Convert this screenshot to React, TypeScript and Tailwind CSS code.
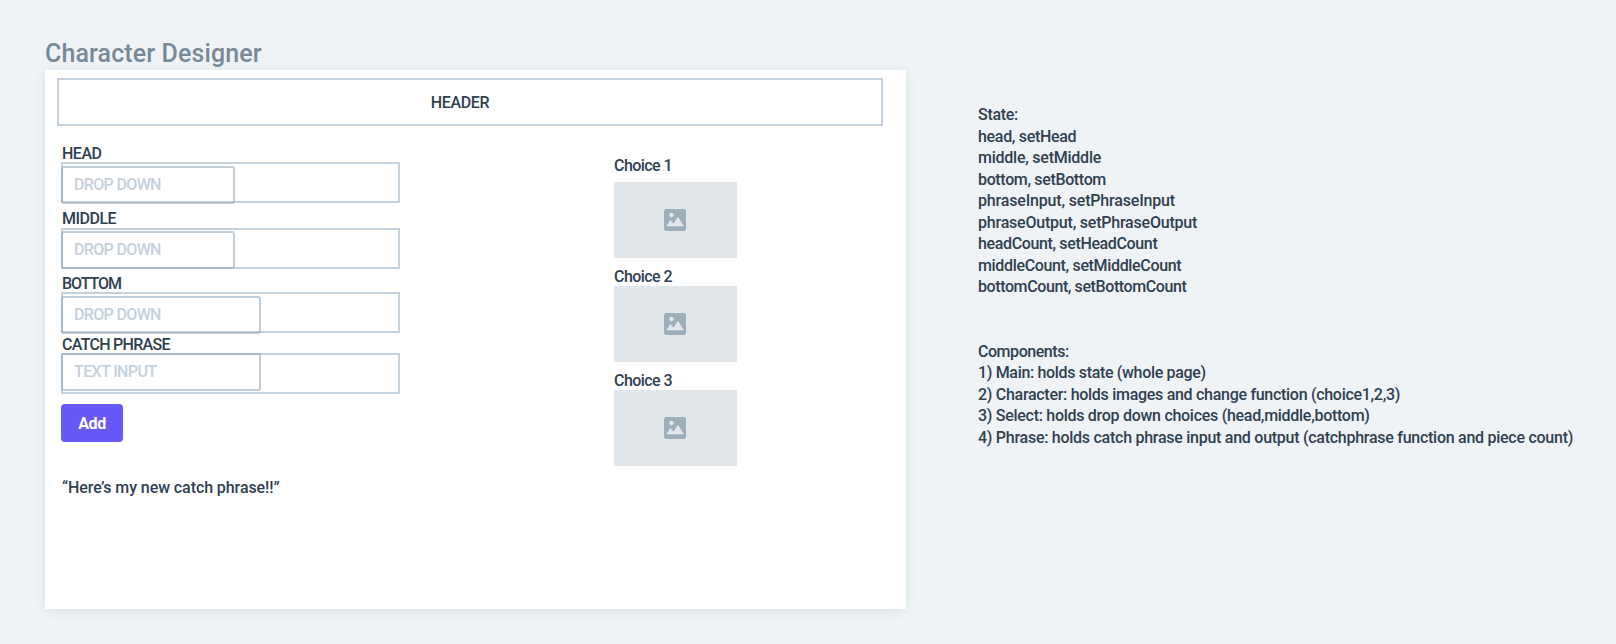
type FieldProps = {
  label: string;
  placeholder: string;
  labelClass: string;
  boxClass: string;
  inputClass: string;
  textClass: string;
};

function Field({ label, placeholder, labelClass, boxClass, inputClass, textClass }: FieldProps) {
  return (
    <div>
      <div className={`h-4 pl-px leading-4 whitespace-nowrap ${labelClass}`}>{label}</div>
      <div className={`h-[41px] w-[339px] border-2 border-[#c5d1dc] ${boxClass}`}>
        <div
          className={`-ml-[2px] flex items-center rounded-[3px] border-2 border-[#8fa5b8]/55 pl-[11px] text-[#c5d1dc] ${inputClass}`}
        >
          <span className={`whitespace-nowrap ${textClass}`}>{placeholder}</span>
        </div>
      </div>
    </div>
  );
}

function Choice({ n, imageClass }: { n: number; imageClass: string }) {
  return (
    <div>
      <div className="h-4 leading-4 tracking-[-0.55px]">Choice {n}</div>
      <div className={`flex h-[76px] w-[123px] items-center justify-center bg-[#e1e7eb] ${imageClass}`}>
        <svg width="22" height="22" viewBox="0 0 22 22" className="mr-px mb-px block">
          <rect width="22" height="22" rx="2" fill="#9eafbc" />
          <circle cx="7.5" cy="6" r="2.2" fill="#e1e7eb" />
          <path d="M2.3 17.2 6.4 11l3 3.8L14 7.7l5.8 9.5z" fill="#e1e7eb" />
        </svg>
      </div>
    </div>
  );
}

const notes: [string, string][] = [
  ["State:", "tracking-[-0.3px]"],
  ["head, setHead", "tracking-[-0.31px]"],
  ["middle, setMiddle", "tracking-[-0.24px]"],
  ["bottom, setBottom", "tracking-[-0.35px]"],
  ["phraseInput, setPhraseInput", "tracking-[-0.17px]"],
  ["phraseOutput, setPhraseOutput", "tracking-[-0.21px]"],
  ["headCount, setHeadCount", "tracking-[-0.36px]"],
  ["middleCount, setMiddleCount", "tracking-[-0.34px]"],
  ["bottomCount, setBottomCount", "tracking-[-0.4px]"],
  ["", ""],
  ["", ""],
  ["Components:", "tracking-[-0.45px]"],
  ["1) Main: holds state (whole page)", "tracking-[-0.33px]"],
  ["2) Character: holds images and change function (choice1,2,3)", "tracking-[-0.29px]"],
  ["3) Select: holds drop down choices (head,middle,bottom)", "tracking-[-0.285px]"],
  ["4) Phrase: holds catch phrase input and output (catchphrase function and piece count)", "tracking-[-0.265px]"],
];

export default function App() {
  return (
    <div className="flex h-[644px] w-[1616px] overflow-hidden bg-[#eff3f6] pl-[45px] font-['Roboto','Liberation_Sans',sans-serif] text-[16px] font-medium text-[#2f404f]">
      <main className="w-[861px] shrink-0 pt-[38px]">
        <h1 className="h-8 text-[25px] leading-8 font-medium tracking-[0.12px] whitespace-nowrap text-[#788997]">
          Character Designer
        </h1>
        <section className="h-[539px] bg-white pt-2 pl-3 shadow-[0_2px_10px_rgba(50,70,90,0.11)]">
          <header className="flex h-12 w-[826px] items-center justify-center border-2 border-[#c5d1dc] pt-[2px] pr-[20px]">
            <span className="tracking-[-0.35px]">HEADER</span>
          </header>
          <div className="flex pl-1">
            <div className="w-[553px] pt-5">
              <Field label="HEAD" placeholder="DROP DOWN" labelClass="tracking-[-0.5px]" boxClass="pt-[2px]" inputClass="h-[38px] w-[174px]" textClass="tracking-[-0.65px]" />
              <div className="h-2" />
              <Field label="MIDDLE" placeholder="DROP DOWN" labelClass="tracking-[-0.5px]" boxClass="mt-px pt-px" inputClass="h-[38px] w-[174px]" textClass="tracking-[-0.65px]" />
              <div className="h-[7px]" />
              <Field label="BOTTOM" placeholder="DROP DOWN" labelClass="tracking-[-1.05px]" boxClass="pt-[2px]" inputClass="h-[38px] w-[200px]" textClass="tracking-[-0.65px]" />
              <div className="h-1" />
              <Field label="CATCH PHRASE" placeholder="TEXT INPUT" labelClass="tracking-[-0.72px]" boxClass="" inputClass="-mt-[2px] h-[38px] w-[200px]" textClass="tracking-[-0.62px]" />
              <button className="mt-[10px] flex h-[38px] w-[62px] items-center justify-center rounded-[4px] bg-[#6659f6] pt-[2px] font-bold tracking-[-0.4px] text-white">
                Add
              </button>
              <p className="mt-[38px] pl-px leading-4 tracking-[-0.08px]">“Here’s my new catch phrase!!”</p>
            </div>
            <div className="pt-8">
              <Choice n={1} imageClass="mt-2" />
              <div className="h-[11px]" />
              <Choice n={2} imageClass="mt-px" />
              <div className="h-[11px]" />
              <Choice n={3} imageClass="mt-px" />
            </div>
          </div>
        </section>
      </main>
      <aside className="ml-[72px] pt-[104px]">
        {notes.map(([text, cls], i) => (
          <div key={i} className="h-[21.5px] leading-[21.5px] whitespace-nowrap">
            <span className={cls}>{text}</span>
          </div>
        ))}
      </aside>
    </div>
  );
}
